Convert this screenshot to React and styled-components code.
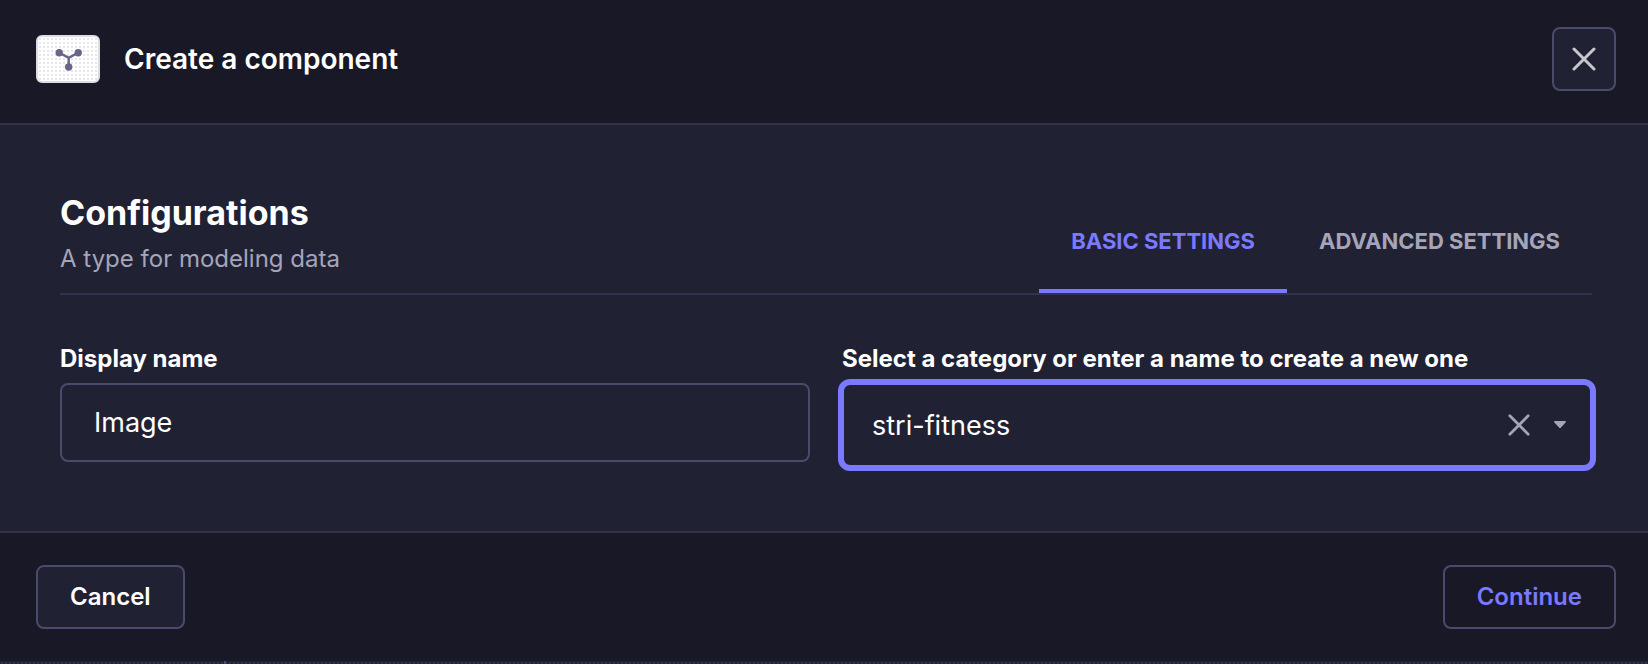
import { useState } from "react";
import styled, { createGlobalStyle } from "styled-components";

const GlobalStyle = createGlobalStyle`
  * {
    box-sizing: border-box;
  }
  body {
    margin: 0;
    background: #212134;
    color: #FFFFFF;
    font-family: Inter, "Liberation Sans", sans-serif;
  }
  h1, h2, p {
    margin: 0;
  }
  button, input {
    font-family: inherit;
  }
`
const ModalStyled = styled.div`
  display: flex;
  flex-direction: column;
  background: #212134;
`
const HeaderStyled = styled.header`
  display: flex;
  align-items: center;
  justify-content: space-between;
  padding: 27px 32px 32px 36px;
  background: #181826;
  border-bottom: 2px solid #32324D;
`
const HeaderTitleStyled = styled.div`
  display: flex;
  align-items: center;
  gap: 24px;
`
const ComponentBadgeStyled = styled.span`
  display: flex;
  align-items: center;
  justify-content: center;
  width: 64px;
  height: 48px;
  border: 2px solid #DCDCE4;
  border-radius: 6px;
  background-color: #FFFFFF;
  background-image: radial-gradient(#E6E6EA 1px, transparent 1px);
  background-size: 4px 4px;
`
const ModalNameStyled = styled.h1`
  font-weight: 600;
  font-size: 28px;
  line-height: 32px;
`
const CloseButtonStyled = styled.button`
  display: flex;
  align-items: center;
  justify-content: center;
  width: 64px;
  height: 64px;
  padding: 0;
  color: #C8C8CE;
  background: #212134;
  border: 2px solid #4A4A6A;
  border-radius: 8px;
`
const BodyStyled = styled.main`
  padding: 64px 56px 64px 60px;
`
const SectionHeadStyled = styled.div`
  display: flex;
  align-items: flex-end;
  justify-content: space-between;
  border-bottom: 2px solid #32324D;
`
const SectionTextStyled = styled.div`
  display: flex;
  flex-direction: column;
  gap: 6px;
  padding-bottom: 18px;
`
const SectionTitleStyled = styled.h2`
  font-weight: 700;
  font-size: 34px;
  line-height: 48px;
`
const SubtitleStyled = styled.p`
  font-size: 24px;
  line-height: 32px;
  color: #A5A5BA;
`
const TabListStyled = styled.div`
  display: flex;
`
const TabStyled = styled.button`
  padding: 32px 32px;
  font-weight: 700;
  font-size: 22px;
  line-height: 32px;
  text-transform: uppercase;
  color: ${(props) => (props.$active ? "#7B79FF" : "#A5A5BA")};
  background: transparent;
  border: 0;
  border-bottom: 4px solid ${(props) => (props.$active ? "#7B79FF" : "transparent")};
`
const FormStyled = styled.form`
  display: grid;
  grid-template-columns: 1fr 1fr;
  gap: 32px;
  align-items: start;
  padding-top: 48px;
`
const FieldStyled = styled.div`
  display: flex;
  flex-direction: column;
  gap: 8px;
  min-width: 0;
`
const LabelStyled = styled.label`
  font-weight: 700;
  font-size: 24px;
  line-height: 32px;
  white-space: nowrap;
`
const TextInputStyled = styled.input`
  width: 100%;
  height: 79px;
  padding: 0 32px;
  font-size: 27px;
  color: #FFFFFF;
  background: #212134;
  border: 2px solid #4A4A6A;
  border-radius: 8px;
  outline: none;
`
const ComboboxStyled = styled.div`
  display: flex;
  align-items: center;
  gap: 24px;
  height: 84px;
  padding: 0 24px 0 28px;
  background: #212134;
  border: 2px solid #7B79FF;
  border-radius: 8px;
  box-shadow: 0 0 0 4px #7B79FF;
`
const ComboboxInputStyled = styled.input`
  flex: 1;
  min-width: 0;
  padding: 0;
  font-size: 27px;
  color: #FFFFFF;
  background: transparent;
  border: 0;
  outline: none;
`
const IconButtonStyled = styled.button`
  display: flex;
  padding: 0;
  color: #A5A5BA;
  background: transparent;
  border: 0;
`
const FooterStyled = styled.footer`
  display: flex;
  justify-content: space-between;
  padding: 32px 32px 32px 36px;
  background: #181826;
  border-top: 2px solid #32324D;
`
const FooterButtonStyled = styled.button`
  height: 64px;
  padding: 0 32px;
  font-weight: 600;
  font-size: 24px;
  line-height: 32px;
  color: ${(props) => (props.$primary ? "#7B79FF" : "#FFFFFF")};
  background: ${(props) => (props.$primary ? "#181826" : "#212134")};
  border: 2px solid #4A4A6A;
  border-radius: 8px;
`
// the sliver of the page that shows under the modal
const PageEdgeStyled = styled.div`
  height: 3px;
  padding-left: 224px;
  background-color: #212134;
  background-image: radial-gradient(#32324D 1px, transparent 1px);
  background-size: 4px 4px;
`
const PageEdgeLineStyled = styled.div`
  width: 2px;
  height: 3px;
  background: #4A4A6A;
`

const ComponentIcon = () => (
    <svg width="28" height="24" viewBox="0 0 28 24" fill="none" aria-hidden="true">
        <path d="M5.3 5.7L14.7 10.8L24 5.7M14.7 10.8V20" stroke="#666687" strokeWidth="2.4"/>
        <circle cx="5.2" cy="5.7" r="3.7" fill="#666687"/>
        <circle cx="24.2" cy="5.7" r="3.7" fill="#666687"/>
        <circle cx="14.7" cy="20" r="3.7" fill="#666687"/>
    </svg>
)

const CrossIcon = ({size, stroke}) => (
    <svg width={size} height={size} viewBox="0 0 24 24" fill="none" aria-hidden="true">
        <path d="M2 2L22 22M22 2L2 22" stroke="currentColor" strokeWidth={stroke} strokeLinecap="round"/>
    </svg>
)

const CaretIcon = () => (
    <svg width="12" height="8" viewBox="0 0 12 8" aria-hidden="true">
        <path d="M0.8 0H11.2Q12.4 0.4 11.6 1.4L7 6.6Q6 7.6 5 6.6L0.4 1.4Q-0.4 0.4 0.8 0Z" fill="currentColor"/>
    </svg>
)

const TABS = ["Basic settings", "Advanced settings"];

export default function App() {
    const [tab, setTab] = useState(TABS[0]);
    const [name, setName] = useState("Image");
    const [category, setCategory] = useState("stri-fitness");

    return (
        <ModalStyled>
            <GlobalStyle/>

            <HeaderStyled>
                <HeaderTitleStyled>
                    <ComponentBadgeStyled><ComponentIcon/></ComponentBadgeStyled>
                    <ModalNameStyled>Create a component</ModalNameStyled>
                </HeaderTitleStyled>
                <CloseButtonStyled type="button" aria-label="Close">
                    <CrossIcon size={24} stroke={3}/>
                </CloseButtonStyled>
            </HeaderStyled>

            <BodyStyled>
                <SectionHeadStyled>
                    <SectionTextStyled>
                        <SectionTitleStyled>Configurations</SectionTitleStyled>
                        <SubtitleStyled>A type for modeling data</SubtitleStyled>
                    </SectionTextStyled>
                    <TabListStyled role="tablist">
                        {TABS.map((item) => (
                            <TabStyled
                                key={item}
                                type="button"
                                role="tab"
                                aria-selected={tab === item}
                                $active={tab === item}
                                onClick={() => setTab(item)}
                            >
                                {item}
                            </TabStyled>
                        ))}
                    </TabListStyled>
                </SectionHeadStyled>

                <FormStyled>
                    <FieldStyled>
                        <LabelStyled htmlFor="displayName">Display name</LabelStyled>
                        <TextInputStyled
                            id="displayName"
                            type="text"
                            value={name}
                            onChange={(e) => setName(e.target.value)}
                        />
                    </FieldStyled>
                    <FieldStyled>
                        <LabelStyled htmlFor="category">Select a category or enter a name to create a new one</LabelStyled>
                        <ComboboxStyled>
                            <ComboboxInputStyled
                                id="category"
                                type="text"
                                role="combobox"
                                aria-expanded="false"
                                value={category}
                                onChange={(e) => setCategory(e.target.value)}
                            />
                            <IconButtonStyled type="button" aria-label="Clear" onClick={() => setCategory("")}>
                                <CrossIcon size={22} stroke={3}/>
                            </IconButtonStyled>
                            <IconButtonStyled type="button" aria-label="Show categories">
                                <CaretIcon/>
                            </IconButtonStyled>
                        </ComboboxStyled>
                    </FieldStyled>
                </FormStyled>
            </BodyStyled>

            <FooterStyled>
                <FooterButtonStyled type="button">Cancel</FooterButtonStyled>
                <FooterButtonStyled type="button" $primary>Continue</FooterButtonStyled>
            </FooterStyled>
            <PageEdgeStyled><PageEdgeLineStyled/></PageEdgeStyled>
        </ModalStyled>
    )
}
